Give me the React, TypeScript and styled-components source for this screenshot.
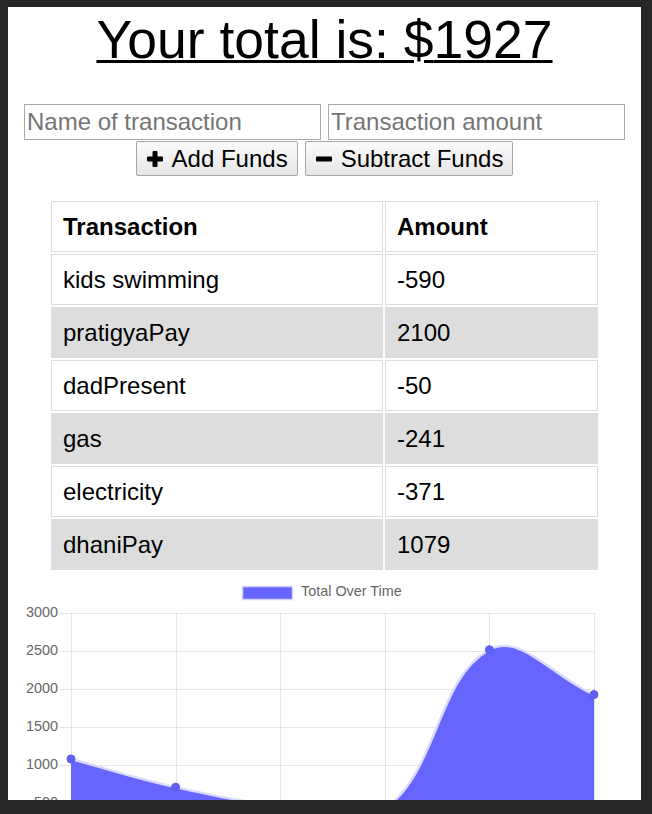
import React from "react";
import styled, { createGlobalStyle } from "styled-components";

const GlobalStyle = createGlobalStyle`
  html, body {
    margin: 0;
    padding: 0;
    background: #262626;
  }
  body {
    font-family: "Liberation Sans", Arial, sans-serif;
    overflow: hidden;
  }
`;

interface Transaction {
  name: string;
  value: number;
}

const transactions: Transaction[] = [
  { name: "kids swimming", value: -590 },
  { name: "pratigyaPay", value: 2100 },
  { name: "dadPresent", value: -50 },
  { name: "gas", value: -241 },
  { name: "electricity", value: -371 },
  { name: "dhaniPay", value: 1079 },
];

const total = transactions.reduce((sum, t) => sum + t.value, 0);

// chart geometry, in page pixels
const plot = { left: 71, right: 594, top: 612, max: 3000, pxPerUnit: 38 / 500 };
const ticks = [3000, 2500, 2000, 1500, 1000, 500, 0];

const toY = (v: number) => plot.top + (plot.max - v) * plot.pxPerUnit;

// running totals from oldest to newest
const totals = (() => {
  let sum = 0;
  return [...transactions].reverse().map((t) => (sum += t.value));
})();

const step = (plot.right - plot.left) / (totals.length - 1);
const points = totals.map((v, i) => ({ x: plot.left + step * i, y: toY(v) }));

// same spline as chart.js (tension 0.4)
const buildCurve = () => {
  const t = 0.4;
  const cps = points.map((cur, i) => {
    const prev = points[i - 1] || cur;
    const next = points[i + 1] || cur;
    const d01 = Math.hypot(cur.x - prev.x, cur.y - prev.y);
    const d12 = Math.hypot(next.x - cur.x, next.y - cur.y);
    const s01 = d01 / (d01 + d12) || 0;
    const s12 = d12 / (d01 + d12) || 0;
    const fa = t * s01;
    const fb = t * s12;
    return {
      inX: cur.x - fa * (next.x - prev.x),
      inY: cur.y - fa * (next.y - prev.y),
      outX: cur.x + fb * (next.x - prev.x),
      outY: cur.y + fb * (next.y - prev.y),
    };
  });
  let d = `M ${points[0].x} ${points[0].y}`;
  for (let i = 1; i < points.length; i++) {
    d += ` C ${cps[i - 1].outX} ${cps[i - 1].outY} ${cps[i].inX} ${cps[i].inY} ${points[i].x} ${points[i].y}`;
  }
  return d;
};

const curve = buildCurve();
const baseY = toY(0);

const Page = styled.div`
  margin: 7px 0 0 8px;
  width: 633px;
  height: 793px;
  background: #ffffff;
  overflow: hidden;
  display: flex;
  flex-direction: column;
  align-items: center;
`;

const Title = styled.h1`
  margin: 3px 0 0;
  font-size: 53.5px;
  font-weight: normal;
  line-height: 60px;
  text-decoration: underline;
  text-decoration-thickness: 3px;
  color: #000;
`;

const Form = styled.div`
  margin-top: 34px;
  display: flex;
  flex-direction: column;
  align-items: center;
  gap: 1px;
`;

const Row = styled.div`
  display: flex;
  gap: 7px;
`;

const Input = styled.input`
  box-sizing: border-box;
  width: 297px;
  height: 36px;
  padding: 0 2px;
  border: 1px solid #a9a9a9;
  font-family: "Liberation Sans", Arial, sans-serif;
  font-size: 24px;
  color: #000;
  outline: none;

  &::placeholder {
    color: #757575;
  }
`;

const Button = styled.button`
  box-sizing: border-box;
  height: 35px;
  display: flex;
  align-items: center;
  gap: 9px;
  padding: 0 9px 0 10px;
  border: 1px solid #a6a6a6;
  border-radius: 2px;
  background: linear-gradient(#fbfbfb, #e6e6e6);
  font-family: "Liberation Sans", Arial, sans-serif;
  font-size: 24px;
  color: #000;
`;

const Table = styled.table`
  margin-top: 23px;
  border-collapse: separate;
  border-spacing: 2px;
  font-size: 24px;
  color: #000;
`;

const Cell = styled.td<{ $wide?: boolean; $head?: boolean }>`
  box-sizing: border-box;
  width: ${({ $wide }) => ($wide ? "332px" : "213px")};
  height: 51px;
  padding: 0 11px;
  border: 1px solid #dddddd;
  font-weight: ${({ $head }) => ($head ? "bold" : "normal")};
  text-align: left;
  line-height: 27px;
`;

const BodyRow = styled.tr`
  &:nth-child(even) td {
    background: #dddddd;
  }
`;

const Chart = styled.svg`
  flex-shrink: 0;
  margin-top: 3px;
  display: block;
`;

const PlusIcon = () => (
  <svg width="16" height="16" viewBox="0 0 16 16">
    <rect x="5.5" y="0" width="5" height="16" rx="1" fill="#000" />
    <rect x="0" y="5.5" width="16" height="5" rx="1" fill="#000" />
  </svg>
);

const MinusIcon = () => (
  <svg width="16" height="16" viewBox="0 0 16 16">
    <rect x="0" y="5.5" width="16" height="5" rx="1" fill="#000" />
  </svg>
);

const App = () => {
  return (
    <>
      <GlobalStyle />
      <Page>
        <Title>Your total is: ${total}</Title>

        <Form>
          <Row>
            <Input type="text" placeholder="Name of transaction" />
            <Input type="number" placeholder="Transaction amount" />
          </Row>
          <Row>
            <Button>
              <PlusIcon />
              Add Funds
            </Button>
            <Button>
              <MinusIcon />
              Subtract Funds
            </Button>
          </Row>
        </Form>

        <Table>
          <thead>
            <tr>
              <Cell as="th" $wide $head>
                Transaction
              </Cell>
              <Cell as="th" $head>
                Amount
              </Cell>
            </tr>
          </thead>
          <tbody>
            {transactions.map((t) => (
              <BodyRow key={t.name}>
                <Cell $wide>{t.name}</Cell>
                <Cell>{t.value}</Cell>
              </BodyRow>
            ))}
          </tbody>
        </Table>

        {/* page coordinates: viewBox starts at the panel's offset */}
        <Chart width="633" height="266" viewBox="8 574 633 266">
          <rect x="242.5" y="585.5" width="50" height="13" fill="#6666ff" stroke="#d4d4ff" strokeWidth="1.5" />
          <text
            x="301"
            y="591"
            fontFamily="Liberation Sans, Arial, sans-serif"
            fontSize="14.4"
            fill="#666"
            dominantBaseline="middle"
          >
            Total Over Time
          </text>

          {ticks.map((v) => (
            <g key={v}>
              <line
                x1="59"
                x2={plot.right}
                y1={Math.round(toY(v)) + 0.5}
                y2={Math.round(toY(v)) + 0.5}
                stroke="rgba(0,0,0,0.1)"
              />
              <text
                x="58"
                y={toY(v)}
                textAnchor="end"
                dominantBaseline="middle"
                fontFamily="Liberation Sans, Arial, sans-serif"
                fontSize="14.4"
                fill="#666"
              >
                {v}
              </text>
            </g>
          ))}
          {points.map((p, i) => (
            <line
              key={i}
              x1={Math.round(p.x) + 0.5}
              x2={Math.round(p.x) + 0.5}
              y1={plot.top}
              y2={baseY + 12}
              stroke="rgba(0,0,0,0.1)"
            />
          ))}

          <path
            d={`${curve} L ${plot.right} ${baseY} L ${plot.left} ${baseY} Z`}
            fill="#6666ff"
          />
          <path d={curve} fill="none" stroke="#dadaff" strokeWidth="2.4" />
          {points.map((p, i) => (
            <circle key={i} cx={p.x} cy={p.y} r="4" fill="#6060f2" stroke="#5a5aea" strokeWidth="1" />
          ))}
        </Chart>
      </Page>
    </>
  );
};

export default App;
